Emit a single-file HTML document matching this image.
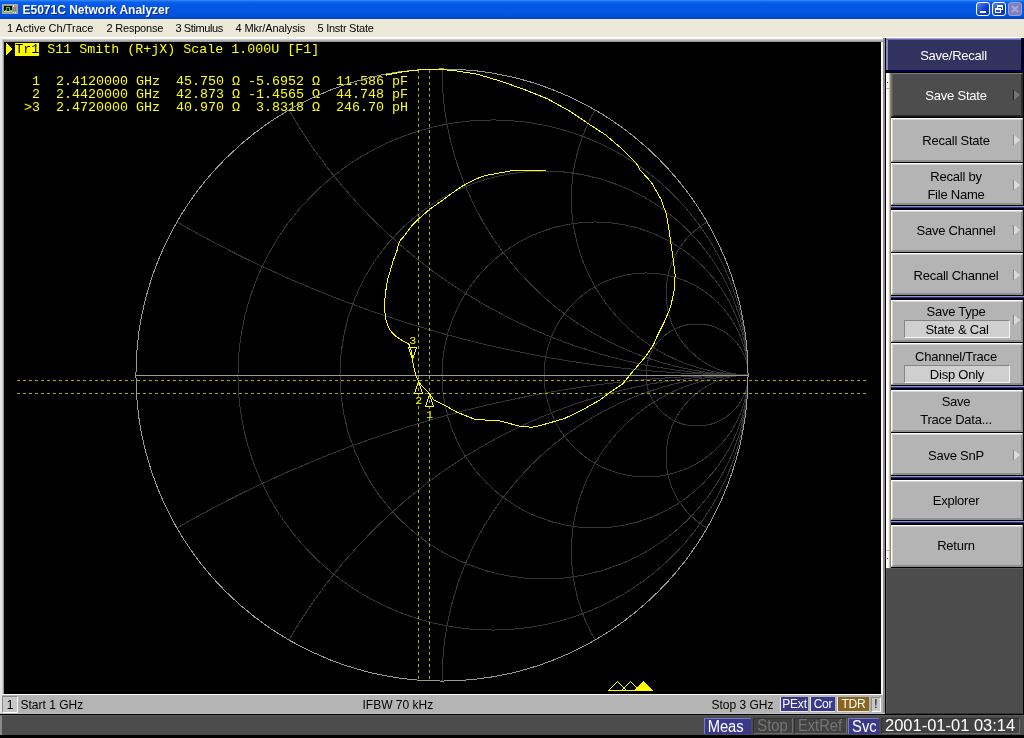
<!DOCTYPE html>
<html><head><meta charset="utf-8"><title>E5071C Network Analyzer</title>
<style>
html,body{margin:0;padding:0;background:#000;}
body{width:1024px;height:738px;position:relative;overflow:hidden;filter:opacity(1);font-family:"Liberation Sans",sans-serif;}
div{position:absolute;box-sizing:border-box;}
#title{left:0;top:0;width:1024px;height:19px;background:linear-gradient(#3a8af8 0px,#0a62ee 2px,#0458e6 5px,#0455e0 12px,#0350d8 16px,#0246c8 19px);}
#title .t{left:22.5px;top:2px;color:#fff;font-weight:bold;font-size:12px;line-height:17px;white-space:nowrap;text-shadow:1px 1px 0 #0a2890;}
#icon{left:2px;top:3px;width:16px;height:12px;background:#8c8c8c;border:1px solid #5a5a5a;}
#icon i{position:absolute;left:1px;top:1px;width:8px;height:7px;background:#0c4a10;border:1px solid #1c1c1c;}
#icon b{position:absolute;left:11px;top:2px;width:2px;height:6px;background:#d8d8d8;}
.wb{top:2px;width:14px;height:14px;border:1px solid #fff;border-radius:3px;background:linear-gradient(135deg,#5a8af4,#0a3ccc 60%,#0a34b8);}
#menu{left:0;top:19px;width:1024px;height:18px;background:#ece9d8;font-size:11px;line-height:18px;color:#000;}
#menu span{position:absolute;top:0;white-space:nowrap;}
#main{left:0;top:37px;width:886px;height:678px;background:#000;}
#frame-top{left:0;top:37px;width:1024px;height:1px;background:#fff;}
#frame-top1{left:0;top:38px;width:883px;height:1px;background:#f4f4f4;}
#frame-top2{left:2px;top:39px;width:881px;height:3px;background:linear-gradient(#d8d8d8,#8a8a8a);}
#frame-l1{left:0;top:38px;width:2px;height:676px;background:#e4e4e4;}
#frame-l2{left:2px;top:40px;width:2px;height:655px;background:linear-gradient(90deg,#e8e8e8,#7c7c7c);}
#frame-r1{left:881px;top:42px;width:2px;height:653px;background:#f6f6f6;}
#frame-r2{left:883px;top:38px;width:2px;height:676px;background:#8c8c8c;}
#frame-r3{left:885px;top:38px;width:1px;height:677px;background:#000;}
#status{left:2px;top:694px;width:881px;height:19px;background:#b4b4b4;border-top:1px solid #fafafa;font-size:12px;line-height:19px;color:#000;}
#status span{position:absolute;white-space:nowrap;top:1px}
#status .bx{top:2px;height:15px;line-height:14px;color:#fff;text-align:center;font-size:12px;letter-spacing:-0.2px;border-left:1px solid #e6e6e6;border-bottom:1px solid #e6e6e6}
#sline1{left:0;top:713px;width:885px;height:1px;background:#c0c0c0;}
#sline2{left:0;top:714px;width:1024px;height:1px;background:#000;}
#bottom{left:0;top:715px;width:1024px;height:20px;background:#4c4c4c;border-left:2px solid #8a8a8a;border-top:1px solid #5a5a5a}
#bottom .b{top:2px;height:16px;font-size:16px;line-height:16px;text-align:center;color:#fff;white-space:nowrap;}
#bottom .b span{display:inline-block;transform:scaleX(0.92);transform-origin:50% 50%;}
#bottom .on{background:#3a3a8c;border-left:1px solid #7a7ac0;border-top:1px solid #7a7ac0;}
#bottom .off{background:#424242;color:#747474;border:1px solid #303030;border-right-color:#6a6a6a;border-bottom-color:#6a6a6a;line-height:14px}
#panelbg{left:886px;top:38px;width:138px;height:676px;background:#000;}
#phead{left:886px;top:38px;width:135px;height:32px;background:#32325f;border-left:2px solid #8484c4;color:#fff;font-size:13px;letter-spacing:-0.25px;line-height:36px;text-align:center;text-indent:-2px}
#phead:before{content:"";position:absolute;left:-2px;top:0;width:135px;height:1px;background:#a0a0dc}
#phead:after{content:"";position:absolute;left:-2px;top:1px;width:135px;height:1px;background:#6a6aa8}
#phead2{left:886px;top:70px;width:138px;height:2px;background:#00003a;}
#phead3{left:1021px;top:39px;width:2px;height:32px;background:#00003a;}
#grip{left:886px;top:73px;width:5px;height:495px;background:linear-gradient(90deg,#fff 0,#fff 2px,#e8e4d0 3px,#a8a490 4px,#76725e 5px);}
#pdark{left:886px;top:568px;width:137px;height:146px;background:#4c4c4c;border-top:1px solid #5c5c5c;border-left:1px solid #5c5c5c;border-bottom:1px solid #333}
.key{left:891px;width:132px;background:#b4b4b4;border:1px solid;border-color:#fff #8e8e8e #8e8e8e #fff;box-shadow:inset 1px 1px 0 #d4d4d4,inset -1px -1px 0 #8e8e8e;color:#000;font-size:13px;letter-spacing:-0.23px;text-align:center;}
.key.dark{background:#4d4d4d;color:#fff;border-color:#7c7c7c #2a2a2a #1c1c1c #707070;box-shadow:inset 1px 0 0 #5c5c5c,inset -1px -1px 0 #2a2a2a}
.key .kl{left:-1px;top:0;width:130px;white-space:nowrap}
.key .kl2{left:-1px;top:4px;width:130px;line-height:18px;white-space:nowrap}
.key .kl1{left:-1px;top:2px;width:130px;line-height:18px;white-space:nowrap}
.key .sub{left:12px;top:19px;width:106px;height:18px;background:#cfcfcf;border:1px solid;border-color:#858585 #f4f4f4 #f4f4f4 #858585;line-height:17px;}
.key .arr{left:122px;width:0;height:0;border-left:6px solid #dadada;border-top:5px solid transparent;border-bottom:5px solid transparent;}
.key .arr:before{content:"";position:absolute;left:-7px;top:-5px;width:1px;height:10px;background:#858585}
.key.dark .arr{border-left-color:#747474}
.key.dark .arr:before{background:#202020}
.sep{left:891px;width:133px;height:3px;background:linear-gradient(#9494d4 0,#9494d4 1px,#30306c 1px,#30306c 2px,#000036 2px,#000036 3px);}
</style></head><body>
<div id="title"><svg width="16" height="10" style="position:absolute;left:2px;top:4px" shape-rendering="crispEdges"><rect x="0" y="0" width="16" height="10" fill="#9c9c9c"/><rect x="0.5" y="0.5" width="15" height="9" fill="none" stroke="#b4a88c"/><rect x="2" y="2" width="8" height="5" fill="#000"/><path d="M2.5 6.5 H4.5 V3.5 H7.5 V6.5 H9.5" fill="none" stroke="#10e010"/><rect x="2" y="7" width="8" height="1" fill="#c8c8c8"/><rect x="11" y="1" width="1" height="2" fill="#fff"/><rect x="11" y="8" width="1" height="1" fill="#eee"/><rect x="13" y="8" width="1" height="1" fill="#eee"/><rect x="11" y="3" width="3" height="4" fill="#8a8a8a"/></svg><div class="t">E5071C Network Analyzer</div>
<div class="wb" style="left:976px"><div style="left:3px;top:8px;width:6px;height:2px;background:#fff"></div></div>
<div class="wb" style="left:992px"><div style="left:4px;top:2px;width:6px;height:5px;border:1px solid #fff;border-top-width:2px"></div><div style="left:2px;top:5px;width:6px;height:5px;border:1px solid #fff;border-top-width:2px;background:#2a5ad8"></div></div>
<div class="wb" style="left:1008px;background:#7c80c0;border-color:#9a9ed4"><svg width="12" height="12" style="position:absolute;left:0;top:0"><path d="M3 3 L9 9 M9 3 L3 9" stroke="#a4a8d8" stroke-width="2"/></svg></div>
</div>
<div id="menu"><span style="left:7px">1 Active Ch/Trace</span><span style="left:106.5px;letter-spacing:-0.21px">2 Response</span><span style="left:175.5px;letter-spacing:-0.4px">3 Stimulus</span><span style="left:235.5px;letter-spacing:-0.13px">4 Mkr/Analysis</span><span style="left:317.5px;letter-spacing:-0.25px">5 Instr State</span></div>
<div id="main"></div>
<svg id="chart" width="877" height="653" viewBox="4 41 877 653" style="position:absolute;left:4px;top:41px" shape-rendering="crispEdges">
<defs><clipPath id="uc"><circle cx="442.00" cy="375.00" r="306.55"/></clipPath></defs>
<g fill="none" stroke="#363636" stroke-width="1" clip-path="url(#uc)">
<circle cx="493.01" cy="375.00" r="255.04"/>
<circle cx="544.02" cy="375.00" r="204.03"/>
<circle cx="595.02" cy="375.00" r="153.03"/>
<circle cx="646.03" cy="375.00" r="102.02"/>
<circle cx="697.04" cy="375.00" r="51.01"/>
<circle cx="748.05" cy="-767.19" r="1142.19"/>
<circle cx="748.05" cy="1517.19" r="1142.19"/>
<circle cx="748.05" cy="-155.09" r="530.09"/>
<circle cx="748.05" cy="905.09" r="530.09"/>
<circle cx="748.05" cy="68.95" r="306.05"/>
<circle cx="748.05" cy="681.05" r="306.05"/>
<circle cx="748.05" cy="198.30" r="176.70"/>
<circle cx="748.05" cy="551.70" r="176.70"/>
<circle cx="748.05" cy="292.99" r="82.01"/>
<circle cx="748.05" cy="457.01" r="82.01"/>
</g>
<g font-family="Liberation Mono, monospace" font-size="13.33px" fill="#ffff00" style="white-space:pre" xml:space="preserve">
<rect x="15" y="43" width="24" height="13" fill="#ffff00"/>
<path d="M6 43 L12 49 L6 55 Z" fill="#ffff00"/>
<text x="15.2" y="53" fill="#000">Tr1</text>
<text x="47.2" y="53">S11 Smith (R+jX) Scale 1.000U [F1]</text>
<text x="16" y="85">&#160;&#160;1&#160;&#160;2.4120000&#160;GHz&#160;&#160;45.750&#160;&#937;&#160;-5.6952&#160;&#937;&#160;&#160;11.586&#160;pF</text>
<text x="16" y="98">&#160;&#160;2&#160;&#160;2.4420000&#160;GHz&#160;&#160;42.873&#160;&#937;&#160;-1.4565&#160;&#937;&#160;&#160;44.748&#160;pF</text>
<text x="16" y="111">&#160;&gt;3&#160;&#160;2.4720000&#160;GHz&#160;&#160;40.970&#160;&#937;&#160;&#160;3.8318&#160;&#937;&#160;&#160;246.70&#160;pH</text>
<text x="409.3" y="344.3" font-size="11.5px">3</text>
<text x="415.3" y="403.7" font-size="11.5px">2</text>
<text x="426.3" y="417.7" font-size="11.5px">1</text>
</g>
<circle cx="442.00" cy="375.00" r="306.05" fill="none" stroke="#9a9a9a"/>
<line x1="135" y1="375.5" x2="749" y2="375.5" stroke="#9a9a9a"/>
<g stroke="#aaaa00" stroke-dasharray="3 3">
<line x1="17" y1="380.5" x2="867" y2="380.5"/>
<line x1="17" y1="393.5" x2="867" y2="393.5"/>
<line x1="418.5" y1="70" x2="418.5" y2="679"/>
<line x1="429.5" y1="70" x2="429.5" y2="679"/>
</g>
<polyline fill="none" stroke="#ffff00" stroke-width="1" points="385.5,75.2 403.0,71.7 418.9,69.9 430.0,69.6 438.2,69.4 453.4,70.5 476.9,74.1 500.3,81.1 523.7,89.3 547.2,98.7 570.6,111.6 589.4,124.4 605.8,135.0 622.2,149.1 636.2,163.1 640.2,170.0 651.2,182.2 661.0,199.3 666.3,213.9 669.5,233.4 672.7,255.4 675.1,274.9 674.4,289.5 670.7,306.6 664.6,321.2 657.3,335.9 653.3,345.2 646.2,355.8 632.2,372.2 622.8,383.9 608.7,393.3 599.4,400.3 580.6,410.9 564.2,418.6 540.8,425.4 531.4,427.3 519.7,426.1 498.6,420.7 475.2,419.5 456.4,412.0 445.0,405.4 433.7,399.7 429.6,394.0 419.0,382.6 415.8,375.3 413.3,365.5 411.7,352.5 409.3,344.4 400.0,339.2 394.4,335.1 389.5,329.4 386.3,321.3 385.0,313.2 384.6,301.8 385.9,290.4 387.6,279.0 390.3,270.9 393.4,260.0 396.8,251.4 398.5,244.4 400.6,240.0 404.6,235.6 411.6,225.9 418.7,218.9 429.7,209.2 439.8,202.2 450.3,194.3 462.6,186.0 475.0,179.3 485.5,175.5 503.0,172.3 512.7,170.5 545.8,170.5"/>
<g fill="none" stroke="#ffff00">
<path d="M408 347.5 H417 M408.5 347.5 L412.5 359 M416.5 347.5 L412.5 359"/>
<path d="M414.5 393.5 L422.5 393.5 L418.5 381.5 Z"/>
<path d="M425.5 406.5 L433.5 406.5 L429.5 394.5 Z"/>
<path d="M608.5 690.5 L617.5 681.5 L626.5 690.5 Z"/>
<path d="M621.5 690.5 L630.5 681.5 L639.5 690.5 Z"/>
<path d="M634.5 690.5 L643.5 681.5 L652.5 690.5 Z" fill="#ffff00"/>
</g>
</svg>
<div id="frame-top"></div><div id="frame-top1"></div><div id="frame-top2"></div><div id="frame-l1"></div><div id="frame-l2"></div><div id="frame-r1"></div><div id="frame-r2"></div><div id="frame-r3"></div>
<div id="status">
<div style="left:0px;top:1px;width:16px;height:17px;border:1px solid;border-color:#8a8a8a #fff #fff #8a8a8a;line-height:17px;text-align:center;font-size:12px;background:#c8c8c8">1</div>
<span style="left:18.5px">Start 1 GHz</span><span style="left:360.5px">IFBW 70 kHz</span><span style="left:709.5px">Stop 3 GHz</span>
<div class="bx" style="left:778px;width:28px;background:#3a3a8c">PExt</div>
<div class="bx" style="left:808px;width:25px;background:#3a3a8c">Cor</div>
<div class="bx" style="left:835px;width:32px;background:#8a6420">TDR</div>
<div style="left:869px;top:2px;width:10px;height:15px;border:1px solid;border-color:#8a8a8a #fff #fff #8a8a8a;line-height:13px;text-align:center;font-size:12px;background:#c8c8c8">!</div>
</div>
<div id="sline1"></div><div id="sline2"></div>
<div id="panelbg"></div>
<div id="phead">Save/Recall</div><div id="phead2"></div><div id="phead3"></div><div id="grip"><div style="left:1px;top:9px;width:1px;height:1px;background:#333"></div><div style="left:0;top:15px;width:4px;height:1px;background:#b8b4a0"></div><div style="left:1px;top:485px;width:1px;height:1px;background:#333"></div><div style="left:0;top:477px;width:4px;height:1px;background:#b8b4a0"></div></div>
<div id="pdark"></div>
<div class="key dark" style="top:73px;height:44px"><div class="kl" style="top:0px;line-height:43px">Save State</div><div class="arr" style="top:16px"></div></div>
<div class="key" style="top:118px;height:44px"><div class="kl" style="top:0px;line-height:43px">Recall State</div><div class="arr" style="top:16px"></div></div>
<div class="key" style="top:163px;height:42px"><div class="kl2" style="top:4px">Recall by<br>File Name</div><div class="arr" style="top:16px"></div></div>
<div class="key" style="top:210px;height:42px"><div class="kl" style="top:-1px;line-height:41px">Save Channel</div><div class="arr" style="top:14px"></div></div>
<div class="key" style="top:253px;height:42px"><div class="kl" style="top:1px;line-height:41px">Recall Channel</div><div class="arr" style="top:16px"></div></div>
<div class="key" style="top:300px;height:42px"><div class="kl1" style="top:2px">Save Type</div><div class="sub" style="top:19px">State &amp; Cal</div><div class="arr" style="top:14px"></div></div>
<div class="key" style="top:343px;height:42px"><div class="kl1" style="top:4px">Channel/Trace</div><div class="sub" style="top:21px">Disp Only</div></div>
<div class="key" style="top:390px;height:42px"><div class="kl2" style="top:2px">Save<br>Trace Data...</div></div>
<div class="key" style="top:433px;height:42px"><div class="kl" style="top:1px;line-height:41px">Save SnP</div><div class="arr" style="top:16px"></div></div>
<div class="key" style="top:480px;height:40px"><div class="kl" style="top:0px;line-height:39px">Explorer</div></div>
<div class="key" style="top:525px;height:42px"><div class="kl" style="top:-1px;line-height:41px">Return</div></div>
<div class="sep" style="top:206px"></div>
<div class="sep" style="top:296px"></div>
<div class="sep" style="top:386px"></div>
<div class="sep" style="top:476px"></div>
<div class="sep" style="top:521px"></div>
<div id="bottom">
<div class="b on" style="left:702px;width:47px;text-indent:-2px"><span>Meas</span></div>
<div class="b off" style="left:751px;width:40px;text-indent:-1px"><span>Stop</span></div>
<div class="b off" style="left:792px;width:53px"><span>ExtRef</span></div>
<div class="b on" style="left:846px;width:31px"><span>Svc</span></div>
<div class="b off" style="left:879px;width:139px;color:#fff;font-size:17px"><span style="transform:scaleX(0.97)">2001-01-01 03:14</span></div>
</div>
</body></html>
